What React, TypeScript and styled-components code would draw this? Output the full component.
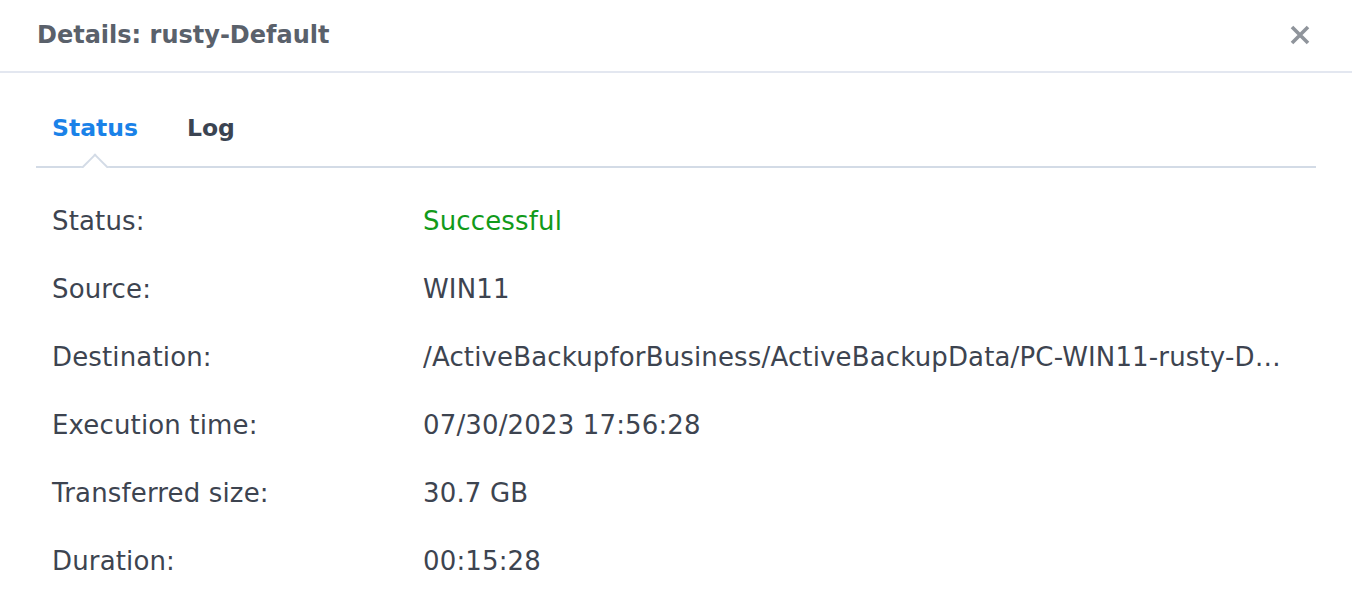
import styled, { createGlobalStyle } from "styled-components";

const GlobalStyle = createGlobalStyle`
  html, body {
    margin: 0;
    padding: 0;
    background: #ffffff;
  }
  body {
    font-family: "DejaVu Sans", Verdana, sans-serif;
  }
`;

const Dialog = styled.div`
  width: 1352px;
  height: 606px;
  background: #ffffff;
  overflow: hidden;
`;

const Header = styled.div`
  height: 73px;
  box-sizing: border-box;
  border-bottom: 2px solid #e3e7f0;
  display: flex;
  align-items: center;
  justify-content: space-between;
  padding: 0 40px 2px 37px;
`;

const Title = styled.h1`
  margin: 0;
  font-size: 24px;
  font-weight: bold;
  color: #5a616b;
`;

const CloseButton = styled.button`
  border: none;
  background: transparent;
  padding: 0;
  width: 24px;
  height: 24px;
  display: flex;
  align-items: center;
  justify-content: center;
  cursor: pointer;
`;

const Body = styled.div`
  padding: 0 36px;
`;

const TabBar = styled.div`
  display: flex;
  gap: 49px;
  padding: 40px 0 0 16px;
  height: 95px;
  box-sizing: border-box;
  border-bottom: 2px solid #d3dbe6;
`;

const Tab = styled.div<{ $active?: boolean }>`
  font-size: 23.5px;
  font-weight: bold;
  color: ${(p) => (p.$active ? "#1a82e8" : "#3b4452")};
  line-height: 30px;
  position: relative;
  cursor: pointer;
`;

const Pointer = styled.span`
  position: absolute;
  left: 50%;
  top: 39px;
  margin-left: -15px;
  width: 30px;
  height: 16px;
  overflow: hidden;

  &::before {
    content: "";
    position: absolute;
    left: 4px;
    top: 6px;
    width: 20px;
    height: 20px;
    background: #ffffff;
    border-left: 2px solid #d3dbe6;
    border-top: 2px solid #d3dbe6;
    transform: rotate(45deg);
  }
`;

const Rows = styled.div`
  display: flex;
  flex-direction: column;
  padding: 0 16px;
  margin-top: 19px;
`;

const Row = styled.div`
  display: grid;
  grid-template-columns: 371px 1fr;
  align-items: center;
  height: 68px;
  font-size: 26px;
  letter-spacing: 0.15px;
  color: #3d4450;
`;

const Label = styled.div`
  white-space: nowrap;
`;

const Value = styled.div<{ $tone?: "success" }>`
  color: ${(p) => (p.$tone === "success" ? "#119a1a" : "#3d4450")};
  white-space: nowrap;
  overflow: hidden;
  text-overflow: ellipsis;
  max-width: 864px;
`;

const rows: { label: string; value: string; tone?: "success" }[] = [
  { label: "Status:", value: "Successful", tone: "success" },
  { label: "Source:", value: "WIN11" },
  {
    label: "Destination:",
    value: "/ActiveBackupforBusiness/ActiveBackupData/PC-WIN11-rusty-Default",
  },
  { label: "Execution time:", value: "07/30/2023 17:56:28" },
  { label: "Transferred size:", value: "30.7 GB" },
  { label: "Duration:", value: "00:15:28" },
];

export default function App() {
  return (
    <Dialog>
      <GlobalStyle />
      <Header>
        <Title>Details: rusty-Default</Title>
        <CloseButton aria-label="Close">
          <svg width="22" height="22" viewBox="0 0 22 22">
            <path
              d="M3 3 L19 19 M19 3 L3 19"
              stroke="#8f949b"
              strokeWidth="3.6"
            />
          </svg>
        </CloseButton>
      </Header>
      <Body>
        <TabBar>
          <Tab $active>
            Status
            <Pointer />
          </Tab>
          <Tab>Log</Tab>
        </TabBar>
        <Rows>
          {rows.map((r) => (
            <Row key={r.label}>
              <Label>{r.label}</Label>
              <Value $tone={r.tone}>{r.value}</Value>
            </Row>
          ))}
        </Rows>
      </Body>
    </Dialog>
  );
}
